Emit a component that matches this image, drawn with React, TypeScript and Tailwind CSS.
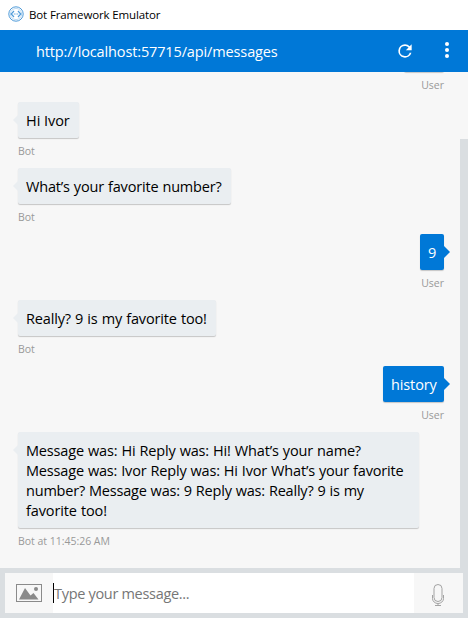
import type { ReactNode } from "react";

type MessageProps = {
  from: "bot" | "user";
  label: string;
  width: string;
  children?: ReactNode;
};

function Message({ from, label, width, children }: MessageProps) {
  const bot = from === "bot";
  return (
    <div className={`flex shrink-0 flex-col ${bot ? "items-start" : "items-end"}`}>
      <div
        className={`relative min-h-9 rounded-[2px] pt-[9px] pr-2 pb-[7px] text-[14.5px] leading-5 whitespace-nowrap shadow-[0_1px_1px_rgba(0,0,0,0.2)] ${width} ${
          bot ? "bg-[#eaeef1] pl-[8.5px] text-black" : "bg-[#0078d7] pl-2 text-white"
        }`}
      >
        {children}
        <svg
          className={`absolute top-3 h-3 w-1.5 ${bot ? "-left-[5px]" : "-right-[6px]"}`}
          viewBox="0 0 6 12"
        >
          <path
            d={bot ? "M6 0 0 6l6 6z" : "M0 0l6 6-6 6z"}
            fill={bot ? "#eaeef1" : "#0078d7"}
          />
        </svg>
      </div>
      <div className="h-[30px] pt-[5px] pl-[0.5px] text-[10.5px] leading-4 tracking-[-0.02px] whitespace-nowrap text-[#999]">
        {label}
      </div>
    </div>
  );
}

function Line({ spacing, children }: { spacing: string; children: ReactNode }) {
  return <div className={spacing}>{children}</div>;
}

export default function App() {
  return (
    <div className="flex h-[618px] w-[468px] flex-col overflow-hidden bg-[#f7f7f7] font-['Open_Sans','Noto_Sans',sans-serif]">
      <div className="flex h-[30px] shrink-0 items-center bg-white pl-2">
        <svg className="-mt-[3px] size-4" viewBox="0 0 16 16" fill="none" stroke="#4f9bd9">
          <circle cx="8" cy="8" r="7.2" strokeWidth="1" />
          <circle cx="8" cy="8" r="5.6" strokeWidth="0.6" opacity="0.6" />
          <path d="M6 5 3.2 8 6 11M10 5l2.8 3-2.8 3" strokeWidth="1.2" />
          <path d="M5.8 8h1M7.5 8h1M9.2 8h1" strokeWidth="1" />
        </svg>
        <span className="ml-[5px] text-[11.5px] leading-4 tracking-[-0.13px] whitespace-nowrap text-black">
          Bot Framework Emulator
        </span>
      </div>

      <div className="flex h-[42px] shrink-0 items-center bg-[#0078d7] pl-9 text-white">
        <span className="w-[353px] pt-[2px] text-[14.5px] leading-5 tracking-[-0.13px] whitespace-nowrap">
          http://localhost:57715/api/messages
        </span>
        <svg className="mt-[-1px] ml-[5.5px] size-5" viewBox="0 0 24 24" fill="currentColor">
          <path d="M17.65 6.35A7.96 7.96 0 0 0 12 4a8 8 0 1 0 7.73 10h-2.08A6 6 0 1 1 12 6c1.66 0 3.14.69 4.22 1.78L13 11h7V4z" />
        </svg>
        <svg className="mt-[-2px] ml-[30.5px] h-4 w-4" viewBox="0 0 16 16" fill="currentColor">
          <circle cx="2" cy="2" r="2" />
          <circle cx="2" cy="8" r="2" />
          <circle cx="2" cy="14" r="2" />
        </svg>
      </div>

      <div className="flex h-[496px] shrink-0">
        <div className="flex w-[460px] flex-col justify-end overflow-hidden pr-4 pb-[10px] pl-[17.5px]">
          <Message from="user" label="User" width="w-[40px]" />
          <Message from="bot" label="Bot" width="w-[61px]">
            <Line spacing="tracking-[-0.05px]">Hi Ivor</Line>
          </Message>
          <Message from="bot" label="Bot" width="w-[213px]">
            <Line spacing="tracking-[-0.17px] [word-spacing:0.4px]">What’s your favorite number?</Line>
          </Message>
          <Message from="user" label="User" width="w-[24px]">
            <Line spacing="tracking-normal">9</Line>
          </Message>
          <Message from="bot" label="Bot" width="w-[198px]">
            <Line spacing="tracking-[-0.15px] [word-spacing:0.5px]">Really? 9 is my favorite too!</Line>
          </Message>
          <Message from="user" label="User" width="w-[61px]">
            <Line spacing="tracking-[-0.12px]">history</Line>
          </Message>
          <Message from="bot" label="Bot at 11:45:26 AM" width="w-[401px]">
            <Line spacing="tracking-[-0.17px] [word-spacing:0.5px]">Message was: Hi Reply was: Hi! What’s your name?</Line>
            <Line spacing="tracking-[-0.17px] [word-spacing:0.4px]">Message was: Ivor Reply was: Hi Ivor What’s your favorite</Line>
            <Line spacing="tracking-[-0.2px] [word-spacing:0.4px]">number? Message was: 9 Reply was: Really? 9 is my</Line>
            <Line spacing="tracking-[-0.12px] [word-spacing:0.4px]">favorite too!</Line>
          </Message>
        </div>
        <div className="flex w-2 flex-col justify-end">
          <div className="h-[429px] bg-[#dadee1]" />
        </div>
      </div>

      <div className="h-[50px] shrink-0 bg-[#dadee1] p-[5px]">
        <div className="flex h-10 bg-white">
          <div className="flex w-12 items-center justify-center bg-[#f7f7f7]">
            <svg className="h-[18px] w-[26px]" viewBox="0 0 26 18">
              <rect x="0.5" y="0.5" width="25" height="17" fill="none" stroke="#8a8a8a" />
              <path d="M3 15.5 9 4l5.5 7.5 3-2.5 5 6.5z" fill="#8a8a8a" />
              <circle cx="20" cy="5" r="2" fill="#8a8a8a" />
            </svg>
          </div>
          <div className="flex flex-1 items-center">
            <div className="h-5 w-px bg-black" />
            <span className="pt-[2px] text-[14.5px] leading-5 tracking-[-0.31px] whitespace-nowrap text-[#767676]">
              Type your message...
            </span>
          </div>
          <div className="flex w-[49px] items-center justify-center bg-[#f7f7f7] pr-px">
            <svg
              className="mt-[3px] h-[22px] w-[14px]"
              viewBox="0 0 14 22"
              fill="none"
              stroke="#a3a3a3"
            >
              <rect x="3" y="0.5" width="8" height="17" rx="4" />
              <path d="M1.5 11v3.5a5.5 5 0 0 0 11 0V11M7 19.5v2M4 21.5h6" />
            </svg>
          </div>
        </div>
      </div>
    </div>
  );
}
